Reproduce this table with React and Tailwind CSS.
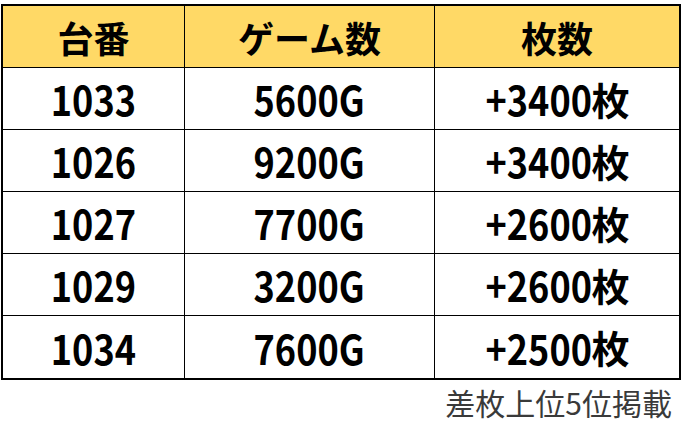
const rows = [
  ['1033', '5600G', '+3400'],
  ['1026', '9200G', '+3400'],
  ['1027', '7700G', '+2600'],
  ['1029', '3200G', '+2600'],
  ['1034', '7600G', '+2500'],
];

const font = { fontFamily: '"Noto Sans CJK JP", sans-serif' };

function Num({ children }) {
  return <span className="inline-block scale-x-[0.88] text-[41px] font-bold leading-none">{children}</span>;
}

function Cell({ children, divider, header }) {
  return (
    <div className={`flex items-center justify-center ${divider ? 'border-r border-black' : ''} ${header ? 'bg-[#FFD966]' : 'bg-white'}`}>
      {children}
    </div>
  );
}

export default function App() {
  return (
    <div className="w-[688px] h-[425px] bg-white text-black" style={font}>
      <div className="pt-1 pl-px">
        <div className="w-[680px] border-2 border-black">
          <div className="grid grid-cols-[182px_250px_244px] h-[62px] border-b border-black">
            <Cell divider header><span className="text-[36px] font-bold leading-none">台番</span></Cell>
            <Cell divider header><span className="text-[36px] font-bold leading-none">ゲーム数</span></Cell>
            <Cell header><span className="text-[36px] font-bold leading-none">枚数</span></Cell>
          </div>
          {rows.map((r, i) => (
            <div key={r[0]} className={`grid grid-cols-[182px_250px_244px] h-[62px] ${i < rows.length - 1 ? 'border-b border-black' : ''}`}>
              <Cell divider><Num>{r[0]}</Num></Cell>
              <Cell divider><Num>{r[1]}</Num></Cell>
              <Cell>
                <div className="flex items-center mr-[14px]">
                  <span className="inline-block origin-right scale-x-[0.88] text-[41px] font-bold leading-none">{r[2]}</span>
                  <span className="text-[38px] font-bold leading-none">枚</span>
                </div>
              </Cell>
            </div>
          ))}
        </div>
      </div>
      <p className="text-right pr-[16px] mt-[4px] text-[30px] leading-[36px] text-[#3a3a3a]">
        差枚上位5位掲載
      </p>
    </div>
  );
}
